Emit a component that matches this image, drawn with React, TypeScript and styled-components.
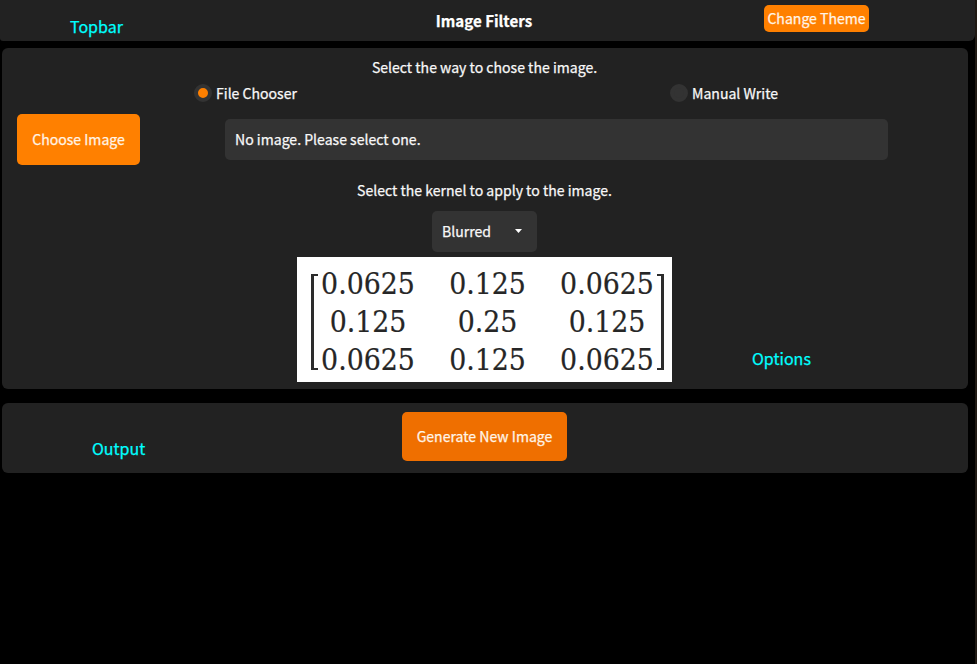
import React from "react";
import styled, { createGlobalStyle } from "styled-components";

const GlobalStyle = createGlobalStyle`
  * { box-sizing: border-box; }
  body {
    margin: 0;
    background: #000;
    color: #f8f8f8;
    font: 400 14.07px/20px "Noto Sans CJK SC", sans-serif;
    -webkit-text-stroke: 0.25px currentColor;
    overflow: hidden;
  }
`;

const Window = styled.div`
  height: 664px;
  border-right: 2px solid #1f1913;
  background: #000;
`;

const Topbar = styled.header`
  display: grid;
  grid-template-columns: 322px 324px 329px;
  height: 41px;
  background: #222;
  border-radius: 0 0 6px 3px;
`;

const Note = styled.span<{ $top: number; $left: number }>`
  padding: ${(p) => p.$top}px 0 0 ${(p) => p.$left}px;
  color: #00ffff;
  font-size: 16px;
  line-height: 20px;
  white-space: nowrap;
`;

const Title = styled.h1`
  margin: 10px 0 0;
  color: #fff;
  font-size: 15.1px;
  line-height: 20px;
  font-weight: 700;
  text-align: center;
`;

const Button = styled.button<{ $w: number; $h: number; $active?: boolean }>`
  width: ${(p) => p.$w}px;
  height: ${(p) => p.$h}px;
  padding: 0 0 2px;
  border: 0;
  border-radius: 5px;
  background: ${(p) => (p.$active ? "#ef6f00" : "#ff8000")};
  color: #fff4e6;
  font: inherit;
  -webkit-text-stroke: inherit;
  white-space: nowrap;
`;

const ThemeSlot = styled.div`
  padding: 5px 0 0 118px;
`;

const Panel = styled.section<{ $h: number; $top: number }>`
  width: 966px;
  height: ${(p) => p.$h}px;
  margin: ${(p) => p.$top}px 0 0 2px;
  border-radius: 6px;
  background: #222;
`;

const Options = styled(Panel)`
  display: flex;
  flex-direction: column;
`;

const Output = styled(Panel)`
  display: grid;
  grid-template-columns: 400px 165px 1fr;
  padding-top: 9px;
`;

const Caption = styled.p<{ $top: number }>`
  margin: ${(p) => p.$top}px 0 1px;
  padding-right: 1px;
  text-align: center;
`;

const Radios = styled.div`
  display: grid;
  grid-template-columns: 476px 1fr;
  padding: 6px 0 0 192px;
`;

const Radio = styled.label`
  display: flex;
  align-items: center;
  gap: 4px;
  height: 18px;
`;

const Dot = styled.span<{ $on?: boolean }>`
  width: 18px;
  height: 18px;
  border: 4px solid #333;
  border-radius: 50%;
  background: ${(p) => (p.$on ? "#ff8000" : "#333")};
`;

const FileRow = styled.div`
  display: flex;
  align-items: center;
  gap: 85px;
  padding: 12px 0 0 15px;
`;

const Field = styled.div`
  width: 663px;
  height: 41px;
  padding: 0 10px;
  border-radius: 5px;
  background: #333;
  line-height: 41px;
`;

const Select = styled.div`
  display: flex;
  align-items: center;
  justify-content: space-between;
  width: 105px;
  height: 41px;
  margin: 10px 0 0 430px;
  padding: 0 15px 2px 10px;
  border-radius: 5px;
  background: #333;
`;

const KernelRow = styled.div`
  display: grid;
  grid-template-columns: 375px 1fr;
  padding: 5px 0 0 295px;
`;

const Kernel = styled.div`
  display: flex;
  justify-content: space-between;
  height: 125px;
  padding: 17px 8px 12px 14px;
  background: #fff;
`;

const Bracket = styled.span<{ $right?: boolean }>`
  width: 8px;
  height: 96px;
  border: 2px solid #2c2c2c;
  border-${(p) => (p.$right ? "right" : "left")}-width: 3px;
  border-${(p) => (p.$right ? "left" : "right")}-width: 0;
`;

const Values = styled.div`
  display: grid;
  grid-template-columns: repeat(3, 119.5px);
  grid-template-rows: 38px 38px 38px;
  margin: -9px -10px 0;
  color: #262626;
  font: 29.8px/38px "DejaVu Serif Condensed", "DejaVu Serif", serif;
  -webkit-text-stroke: 0.2px #262626;
  text-align: center;
`;

const kernel = ["0.0625", "0.125", "0.0625", "0.125", "0.25", "0.125", "0.0625", "0.125", "0.0625"];

export default function App() {
  return (
    <>
      <GlobalStyle />
      <Window>
        <Topbar>
          <Note $top={16} $left={70}>Topbar</Note>
          <Title>Image Filters</Title>
          <ThemeSlot>
            <Button $w={105} $h={27}>Change Theme</Button>
          </ThemeSlot>
        </Topbar>
        <Options as="main" $h={341} $top={7}>
          <Caption $top={9}>Select the way to chose the image.</Caption>
          <Radios>
            <Radio><Dot $on />File Chooser</Radio>
            <Radio><Dot />Manual Write</Radio>
          </Radios>
          <FileRow>
            <Button $w={123} $h={51}>Choose Image</Button>
            <Field>No image. Please select one.</Field>
          </FileRow>
          <Caption $top={15}>Select the kernel to apply to the image.</Caption>
          <Select>
            Blurred
            <svg width="7" height="4" viewBox="0 0 7 4"><path d="M0 0h7L3.5 4z" fill="#fff" /></svg>
          </Select>
          <KernelRow>
            <Kernel>
              <Bracket />
              <Values>
                {kernel.map((v, i) => <span key={i}>{v}</span>)}
              </Values>
              <Bracket $right />
            </Kernel>
            <Note $top={91} $left={80}>Options</Note>
          </KernelRow>
        </Options>
        <Output $h={70} $top={14}>
          <Note $top={26} $left={90}>Output</Note>
          <Button $w={165} $h={49} $active>Generate New Image</Button>
        </Output>
      </Window>
    </>
  );
}
